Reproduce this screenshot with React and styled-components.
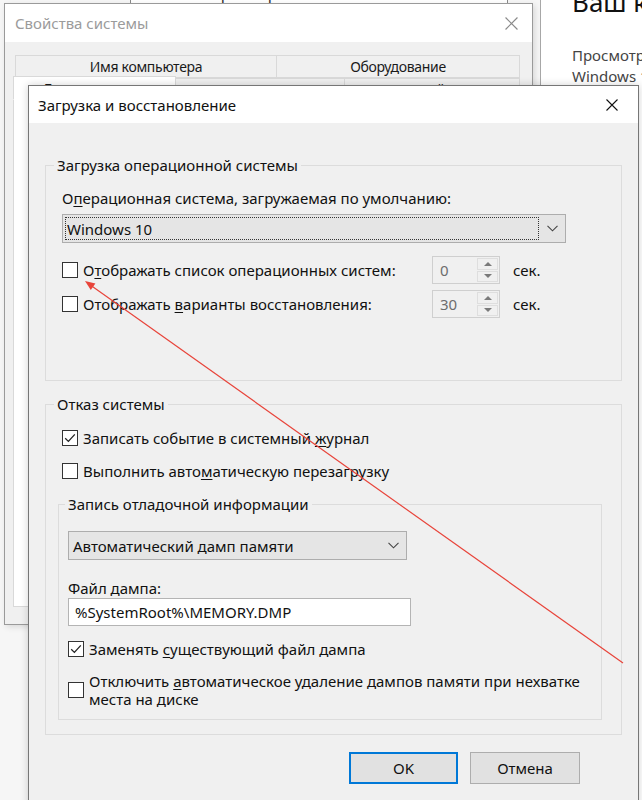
import React from 'react';
import styled, { createGlobalStyle } from 'styled-components';

const Global = createGlobalStyle`
  html, body { margin: 0; padding: 0; }
  body {
    width: 642px; height: 800px; overflow: hidden; background: #fff;
    font-family: "Noto Sans", "Open Sans", "DejaVu Sans", sans-serif;
    color: #111;
  }
`;

const Desktop = styled.div`
  position: relative; width: 642px; height: 800px; overflow: hidden;
  display: flex;
`;

/* ---------- Settings app behind ---------- */
const Sidebar = styled.div`
  width: 541px; flex: none; background: #f6f6f6; border-right: 1px solid #a8a8a8;
  padding-left: 130px; box-sizing: border-box;
`;
const SearchBox = styled.div`
  margin-top: -22px; width: 378px; height: 29px; box-sizing: border-box;
  border: 1px solid #8a8a8a; background: #fff; display: flex; align-items: center;
  padding-left: 19px; font-size: 16px; color: #333; justify-content: space-between; padding-right: 8px;
`;
const SearchIcon = styled.span`
  width: 10px; height: 10px; border: 1px solid #555; border-radius: 50%;
`;
const Content = styled.div`
  flex: 1; padding-left: 31px; white-space: nowrap; overflow: hidden; background: #fff;
`;
const PageHeading = styled.div`
  margin-top: -14px; font-size: 26px; line-height: 32px; color: #111;
`;
const PageText = styled.div`
  margin-top: 27px; font-size: 15px; line-height: 21px; color: #444;
`;

/* ---------- System properties window (inactive) ---------- */
const SysWindow = styled.div`
  position: absolute; z-index: 0; left: 4px; top: 3px; width: 529px; height: 622px; box-sizing: border-box;
  border: 1px solid #9a9a9a; background: #f0f0f0; display: flex; flex-direction: column;
  box-shadow: 2px 2px 6px rgba(0,0,0,0.12);
`;
const TitleBar = styled.div`
  height: ${p => p.$h}px; flex: none; background: #fff; display: flex; align-items: center;
  justify-content: space-between; padding: 0 ${p => p.$pr}px 0 ${p => p.$pl}px;
  font-size: 15px; color: ${p => (p.$inactive ? '#9b9b9b' : '#111')};
`;
const Tabs = styled.div`
  flex: 1; display: flex; flex-direction: column; padding: 13px 12px 17px 8px;
`;
const TabRow = styled.div`
  display: flex; padding-left: ${p => p.$pl || 0}px;
`;
const Tab = styled.div`
  width: ${p => p.$w}px; height: ${p => p.$h || 23}px; box-sizing: border-box;
  border: 1px solid #d9d9d9; border-left-width: ${p => (p.$first ? 1 : 0)}px;
  background: ${p => (p.$active ? '#fff' : '#f0f0f0')};
  margin-top: ${p => (p.$active ? -2 : 0)}px;
  border-bottom-color: ${p => (p.$active ? '#fff' : '#d9d9d9')};
  position: relative; z-index: ${p => (p.$active ? 1 : 0)};
  display: flex; align-items: center; justify-content: center;
  font-size: 14px; letter-spacing: -0.3px; color: #1a1a1a;
`;
const Panel = styled.div`
  flex: 1; background: #fff; border: 1px solid #d9d9d9; margin-top: -1px;
`;

/* ---------- Boot and recovery dialog ---------- */
const Dialog = styled.div`
  position: absolute; z-index: 1; left: 28px; top: 85px; width: 611px; height: 740px; box-sizing: border-box;
  border: 1px solid #767676; background: #f0f0f0; display: flex; flex-direction: column;
  box-shadow: 0 0 8px rgba(0,0,0,0.18);
`;
const Body = styled.div`
  flex: 1; padding: 32px 16px 0 16px; display: flex; flex-direction: column;
  font-size: 15px; line-height: 20px;
`;
const Group = styled.fieldset`
  margin: ${p => p.$m || '0'};
  padding: ${p => p.$pad};
  border: 1px solid #dcdcdc;
  min-width: 0;
  display: flex; flex-direction: column; align-items: flex-start;
  align-self: ${p => (p.$stretch ? 'stretch' : 'auto')};
`;
const Legend = styled.legend`
  padding: 0 3px; margin-left: ${p => p.$ml}px;
  font-size: 15px; line-height: 20px; color: #111;
`;
const Label = styled.div`
  margin-top: ${p => p.$mt || 0}px; line-height: ${p => p.$lh || 20}px;
`;
const Combo = styled.div`
  margin-top: ${p => p.$mt}px; width: ${p => p.$w}px; height: 29px; box-sizing: border-box;
  border: 1px solid #adadad; background: #e5e5e5; display: flex; align-items: stretch;
  padding: 2px 0 2px 2px;
`;
const ComboText = styled.div`
  flex: 1; display: flex; align-items: center; padding-left: 2px;
  outline: ${p => (p.$focus ? '1px dotted #333' : 'none')};
  outline-offset: -1px;
`;
const ComboArrow = styled.div`
  width: 26px; display: flex; align-items: center; justify-content: center; flex: none;
`;
const Row = styled.div`
  margin-top: ${p => p.$mt}px; display: flex; align-items: center;
`;
const CheckWrap = styled.label`
  display: flex; align-items: center; gap: 5px; width: ${p => (p.$w ? `${p.$w}px` : 'auto')};
  line-height: ${p => p.$lh || 20}px; margin-top: ${p => p.$mt || 0}px;
`;
const Box = styled.span`
  width: 16px; height: 16px; box-sizing: border-box; border: 1px solid #333; background: #fff;
  flex: none; display: flex; align-items: center; justify-content: center;
`;
const U = styled.span` text-decoration: underline; text-underline-offset: 2px; `;
const Spin = styled.div`
  width: 68px; height: 28px; box-sizing: border-box; border: 1px solid #cfcfcf; background: #f0f0f0;
  display: flex;
`;
const SpinValue = styled.div` flex: 1; padding-left: 7px; line-height: 26px; color: #6d6d6d; `;
const SpinButtons = styled.div`
  width: 21px; display: flex; flex-direction: column; gap: 1px; padding: 1px 1px 1px 0;
`;
const SpinBtn = styled.div`
  flex: 1; border: 1px solid #dedede; display: flex; align-items: center; justify-content: center;
`;
const Tri = styled.span`
  width: 0; height: 0; border-left: 4px solid transparent; border-right: 4px solid transparent;
  ${p => (p.$up ? 'border-bottom: 4px solid #7a7a7a;' : 'border-top: 4px solid #7a7a7a;')}
`;
const Sec = styled.span` margin-left: 13px; `;
const TextBox = styled.div`
  width: 343px; height: 28px; box-sizing: border-box; border: 1px solid #b4b4b4; background: #fff;
  padding-left: 6px; line-height: 26px;
`;
const Buttons = styled.div`
  margin-top: 17px; display: flex; justify-content: flex-end; gap: 12px; padding-right: 42px;
`;
const Button = styled.div`
  width: ${p => p.$w}px; height: 32px; box-sizing: border-box; background: #e1e1e1;
  border: ${p => (p.$default ? '2px solid #0078d7' : '1px solid #adadad')};
  display: flex; align-items: center; justify-content: center; font-size: 15px;
`;
const Overlay = styled.svg`
  position: absolute; z-index: 2; left: 0; top: 0; pointer-events: none;
`;

const CloseX = ({ color, size = 12 }) => (
  <svg width={size} height={size} viewBox="0 0 12 12">
    <path d="M0.5 0.5 L11.5 11.5 M11.5 0.5 L0.5 11.5" stroke={color} strokeWidth="1.1" fill="none" />
  </svg>
);

const Chevron = () => (
  <svg width="11" height="7" viewBox="0 0 11 7">
    <path d="M0.5 0.8 L5.5 5.8 L10.5 0.8" stroke="#444" strokeWidth="1.1" fill="none" />
  </svg>
);

const Check = ({ checked }) => (
  <Box>
    {checked && (
      <svg width="12" height="12" viewBox="0 0 12 12">
        <path d="M1.2 6.2 L4.4 9.4 L10.8 2.4" stroke="#222" strokeWidth="1.3" fill="none" />
      </svg>
    )}
  </Box>
);

const Spinner = ({ value }) => (
  <Spin>
    <SpinValue>{value}</SpinValue>
    <SpinButtons>
      <SpinBtn><Tri $up /></SpinBtn>
      <SpinBtn><Tri /></SpinBtn>
    </SpinButtons>
  </Spin>
);

export default function App() {
  return (
    <>
      <Global />
      <Desktop>
        <Sidebar>
          <SearchBox>Найти параметр<SearchIcon /></SearchBox>
        </Sidebar>
        <Content>
          <PageHeading>Ваш компьютер отслеживается и защищен.</PageHeading>
          <PageText>
            Просмотр основных сведений о вашем компьютере<br />
            Windows 10 Pro
          </PageText>
        </Content>

        <SysWindow>
          <TitleBar $h={38} $pl={10} $pr={14} $inactive>
            <span>Свойства системы</span>
            <CloseX color="#8a8a8a" size={13} />
          </TitleBar>
          <Tabs>
            <TabRow $pl={2}>
              <Tab $w={262} $first>Имя компьютера</Tab>
              <Tab $w={243}>Оборудование</Tab>
            </TabRow>
            <TabRow>
              <Tab $w={163} $h={24} $first $active>Дополнительно</Tab>
              <Tab $w={169} $h={22}>Защита системы</Tab>
              <Tab $w={175} $h={22}>Удаленный доступ</Tab>
            </TabRow>
            <Panel />
          </Tabs>
        </SysWindow>

        <Dialog>
          <TitleBar $h={37} $pl={9} $pr={20}>
            <span>Загрузка и восстановление</span>
            <CloseX color="#111" />
          </TitleBar>
          <Body>
            <Group $pad="0 16px 62px">
              <Legend $ml={-8}>Загрузка операционной системы</Legend>
              <Label $mt={13}>О<U>п</U>ерационная система, загружаемая по умолчанию:</Label>
              <Combo $mt={6} $w={504}>
                <ComboText $focus>Windows 10</ComboText>
                <ComboArrow><Chevron /></ComboArrow>
              </Combo>
              <Row $mt={13}>
                <CheckWrap $w={370}>
                  <Check />
                  <span>О<U>т</U>ображать список операционных систем:</span>
                </CheckWrap>
                <Spinner value="0" />
                <Sec>сек.</Sec>
              </Row>
              <Row $mt={6}>
                <CheckWrap $w={370}>
                  <Check />
                  <span>Отображать <U>в</U>арианты восстановления:</span>
                </CheckWrap>
                <Spinner value="30" />
                <Sec>сек.</Sec>
              </Row>
            </Group>

            <Group $m="13px 0 0 0" $pad="0 16px 14px">
              <Legend $ml={-8}>Отказ системы</Legend>
              <CheckWrap $mt={14}>
                <Check checked />
                <span>Записать событие в системный <U>ж</U>урнал</span>
              </CheckWrap>
              <CheckWrap $mt={13}>
                <Check />
                <span>Выполнить авто<U>м</U>атическую перезагрузку</span>
              </CheckWrap>

              <Group $m="13px 3px 0 -4px" $pad="0 9px 11px 9px" $stretch>
                <Legend $ml={-3}>Запись отладочной информации</Legend>
                <Combo $mt={17} $w={339}>
                  <ComboText>Автоматический дамп памяти</ComboText>
                  <ComboArrow><Chevron /></ComboArrow>
                </Combo>
                <Label $mt={19} $lh={19}>Файл дампа:</Label>
                <TextBox>%SystemRoot%\MEMORY.DMP</TextBox>
                <CheckWrap $mt={13}>
                  <Check checked />
                  <span>Заменять <U>с</U>уществующий файл дампа</span>
                </CheckWrap>
                <CheckWrap $mt={13} $lh={18}>
                  <Check />
                  <span>
                    Отключить <U>а</U>втоматическое удаление дампов памяти при нехватке<br />
                    места на диске
                  </span>
                </CheckWrap>
              </Group>
            </Group>

            <Buttons>
              <Button $w={109} $default>OK</Button>
              <Button $w={110}>Отмена</Button>
            </Buttons>
          </Body>
        </Dialog>

        <Overlay width="642" height="800" viewBox="0 0 642 800">
          <line x1="623" y1="663" x2="91" y2="285.5" stroke="#e8443a" strokeWidth="1.2" />
          <polygon points="85,281 95.4,283.5 90.8,290.1" fill="#e8443a" />
        </Overlay>
      </Desktop>
    </>
  );
}
